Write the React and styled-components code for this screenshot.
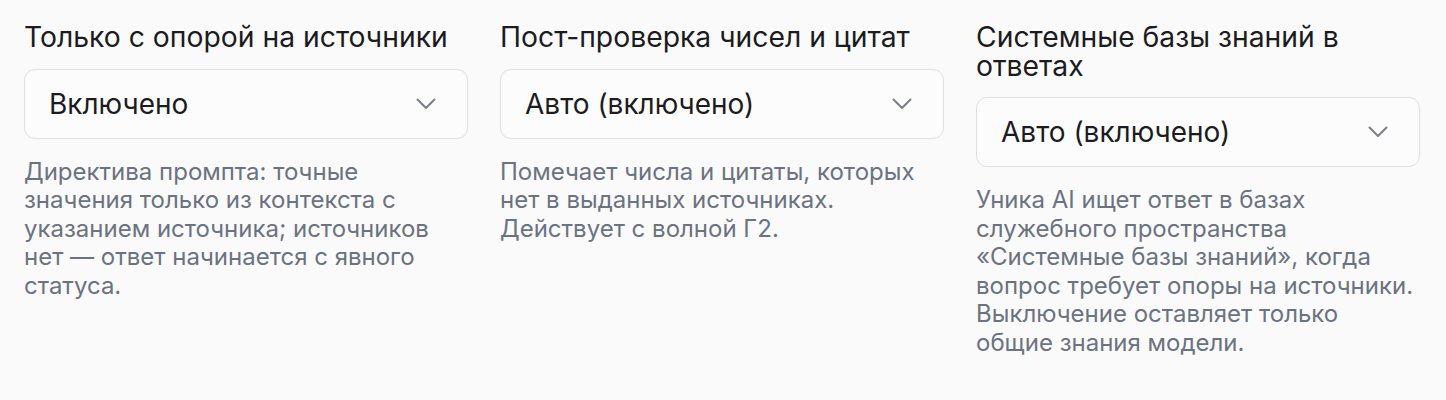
import React from 'react';
import styled, { createGlobalStyle } from 'styled-components';

const GlobalStyle = createGlobalStyle`
    html, body {
        margin: 0;
        padding: 0;
        background: #fafafa;
    }
    body {
        font-family: Inter, "Noto Sans", "Liberation Sans", sans-serif;
        -webkit-font-smoothing: antialiased;
    }
`;

const Page = styled.div`
    display: grid;
    grid-template-columns: repeat(3, 444px);
    column-gap: 32px;
    align-items: start;
    padding: 23px 24px;
`;

const Field = styled.div`
    display: flex;
    flex-direction: column;
`;

const Label = styled.label`
    font-size: 28.3px;
    line-height: 28.5px;
    font-weight: 400;
    color: #1c1c1e;
    margin-bottom: 17px;
`;

const SelectBox = styled.div`
    display: flex;
    align-items: center;
    justify-content: space-between;
    height: 70px;
    box-sizing: border-box;
    padding: 0 31px 0 24px;
    background: #fcfcfc;
    border: 1.5px solid #dcdfe4;
    border-radius: 11px;
    font-size: 28px;
    color: #1c1c1e;
    cursor: pointer;
`;

const Chevron = styled.svg`
    width: 20px;
    height: 12px;
    color: #7b7f86;
    flex-shrink: 0;
`;

const Hint = styled.p`
    margin: 19px 0 0;
    font-size: 24px;
    line-height: 28.6px;
    color: #6b7280;
`;

const fields = [
    {
        label: 'Только с опорой на источники',
        value: 'Включено',
        hint: 'Директива промпта: точные значения только из контекста с указанием источника; источников нет — ответ начинается с явного статуса.',
    },
    {
        label: 'Пост-проверка чисел и цитат',
        value: 'Авто (включено)',
        hint: 'Помечает числа и цитаты, которых нет в выданных источниках. Действует с волной Г2.',
    },
    {
        label: 'Системные базы знаний в ответах',
        value: 'Авто (включено)',
        hint: 'Уника AI ищет ответ в базах служебного пространства «Системные базы знаний», когда вопрос требует опоры на источники. Выключение оставляет только общие знания модели.',
    },
];

function Select({ value }) {
    return (
        <SelectBox>
            <span>{value}</span>
            <Chevron viewBox="0 0 20 12" fill="none" stroke="currentColor" strokeWidth="2" strokeLinecap="round" strokeLinejoin="round">
                <path d="M1.5 1.5L10 10l8.5-8.5" />
            </Chevron>
        </SelectBox>
    );
}

export default function App() {
    return (
        <>
            <GlobalStyle />
            <Page>
                {fields.map((f) => (
                    <Field key={f.label}>
                        <Label>{f.label}</Label>
                        <Select value={f.value} />
                        <Hint>{f.hint}</Hint>
                    </Field>
                ))}
            </Page>
        </>
    );
}
